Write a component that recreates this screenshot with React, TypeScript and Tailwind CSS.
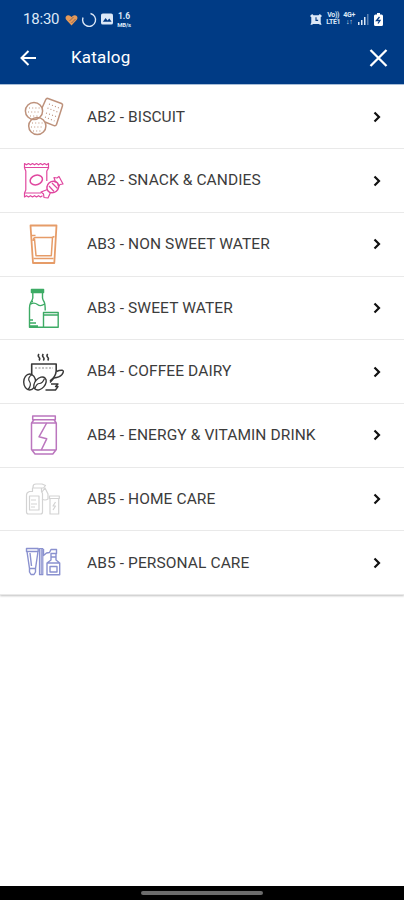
import type { ReactNode } from "react";

type Category = {
  name: string;
  color: string;
  icon: ReactNode;
};

const CATEGORIES: Category[] = [
  {
    name: "AB2 - BISCUIT",
    color: "text-[#bd917b]",
    icon: (
      <>
        <path d="M26 3.5 39.5 8.5Q41 9.2 40.5 10.8L34.5 29.5Q33.8 31.2 32 30.6L23 27M20 13 23.8 4.5Q24.5 3 26 3.5" strokeWidth="1.5" />
        <circle cx="12" cy="16" r="8.6" strokeWidth="1.5" />
        <circle cx="15.3" cy="31" r="8.6" strokeWidth="1.5" />
        <path d="M27 9 37 13M25.5 13 35.5 17M24 18 34 21.5M23 22 32.5 26" strokeDasharray="1 2.2" />
        <path d="M7 13h11M6 17h12M8 21h9M10 28h11M9 32h12M11 36h9" strokeDasharray="1 2.2" />
      </>
    ),
  },
  {
    name: "AB2 - SNACK & CANDIES",
    color: "text-[#e0479f]",
    icon: (
      <>
        <path d="M2.5 9V4.5l2 1.3 2-1.3 2 1.3 2-1.3 2 1.3 2-1.3 2 1.3 2-1.3 2 1.3 2-1.3 2 1.3 2-1.3V9l-1.7 3v10M2.5 9l1.3 3v19l-1.3 3v4l2-1.3 2 1.3 2-1.3 2 1.3 2-1.3 2 1.3 2-1.3 2 1.3 2-1.3" />
        <path d="M3 8.5h23M3 34h16" />
        <ellipse cx="14.3" cy="21" rx="6.3" ry="4.7" transform="rotate(-18 14.3 21)" strokeWidth="1.5" />
        <ellipse cx="30.8" cy="28" rx="6.2" ry="5.5" transform="rotate(-40 30.8 28)" strokeWidth="1.5" />
        <path d="m25.5 30.5-6.5 2.5 2.5 2 .5 3.5 4 .5 2.5-5.5M33.5 23.5 32 18.5l3 .5 2-1.5 4 7.500-3 .5-1 1.500-1.500-1.500M27 27l5 5.500M30 24l5.500 5.500" />
      </>
    ),
  },
  {
    name: "AB3 - NON SWEET WATER",
    color: "text-[#e69c68]",
    icon: (
      <>
        <path d="M8.5 3.5h26L32.3 41H11z" strokeWidth="1.8" />
        <path d="M9.5 13.5h4M30 15.5l2.5-1M11 19q0-3.5 3-3.5h16.5L29.3 33.8H14L12.5 17M11.5 36.5h20" strokeWidth="1.5" />
      </>
    ),
  },
  {
    name: "AB3 - SWEET WATER",
    color: "text-[#3dab65]",
    icon: (
      <>
        <path d="M9.5 3.5h12v3h-12zM9.8 5h11.5" strokeWidth="1.5" />
        <path d="M10.8 7v5Q10.5 14 8.5 17q-1 2-1 5v19.2h14M20.5 7v5q.3 2 1.7 4 1 2 1 8.5M10 15.5h1M8.5 18q4-2 7 .5t7-.5M8 34h3M8 37h6M8 40h8" strokeWidth="1.4" />
        <path d="M21.5 26.5h14.7v14.7H21.5zM22 29h14" strokeWidth="1.4" />
      </>
    ),
  },
  {
    name: "AB4 - COFFEE DAIRY",
    color: "text-[#383838]",
    icon: (
      <>
        <path d="M17 4q-1.5 1.7 0 3.3t0 3.2M21.3 4q-1.5 1.7 0 3.3t0 3.2M25.7 4q-1.5 1.7 0 3.3t0 3.2" strokeWidth="1.5" />
        <path d="M9.7 24V14h24.5v7q-.5 6-6.2 10" strokeWidth="1.6" />
        <path d="M13 18h18" strokeDasharray="2 1.5" opacity=".6" />
        <path d="M34.5 21.5q3-1.5 6-1.2 2 .7-.5 4.2-2.5 3-8 3.5l-4 4.5M29 34h7l-2.500 2.500h2.500l-2.500 3.500H23.500" strokeWidth="1.4" />
        <ellipse cx="7.7" cy="32" rx="6" ry="8" strokeWidth="1.4" />
        <path d="M10 24.5q-5 3.5-2.5 7t-1.5 8" />
        <ellipse cx="18" cy="33.5" rx="5" ry="7.5" transform="rotate(42 18 33.5)" fill="#fff" strokeWidth="1.4" />
        <path d="M22.5 28.5q-2 5-5 5T13 38.5" />
      </>
    ),
  },
  {
    name: "AB4 - ENERGY & VITAMIN DRINK",
    color: "text-[#bb76be]",
    icon: (
      <>
        <path d="M10.7 3h22.6v3.7H10.7zM12 6.7 9.5 10M32 6.7l2.3 3.3M9.5 10h24.8v26.5l-3.5 4.500H13l-3.500-4.500zM9.500 37h24.800" strokeWidth="1.5" />
        <path d="M24.7 10 17 23.8l7.7 2L19.3 37" strokeWidth="1.5" />
      </>
    ),
  },
  {
    name: "AB5 - HOME CARE",
    color: "text-[#d3d3d3]",
    icon: (
      <>
        <path d="M11 10q0-3 3-3h6l3.5 1.5-2 2.5H11zM10.5 11h9v3.5l1 2V35q0 2-2 2h-12q-2 0-2-2V18q0-2.500 3-3.500h3z" />
        <path d="M7.5 19h9.5v14H7.5zM9 23h5M9 27h6M9 30h4M20 15l3-4 3 6v5q-3 2-6 0" />
        <path d="M27.5 19h9.8v2.5h-9.8zM28 21.5V37h8.7V21.5M33.5 25l-2.5 4h2.5l-2.5 4" />
      </>
    ),
  },
  {
    name: "AB5 - PERSONAL CARE",
    color: "text-[#8a91cf]",
    icon: (
      <>
        <path d="M4.5 7.5h11.7v3H4.5zM5 10.5l2.5 17h6l2.5-17M7.5 27.5v3.5l1.5 2.5h3l1.5-2.5v-3.5M8 12l1.5 13" strokeWidth="1.4" />
        <path d="M17.5 7.5h3.3v26.2h-3.3zM19.2 8v25" />
        <path d="M21.5 8v6.5l3-2.5 3-.5 1.5-3h5.5v4h-5.5V16M34 12v4h-5.5M29 16v3l-4 3v11.7h12.7V22L34 19v-3M25 22h12.7M28 25.5h7v5.5h-7z" strokeWidth="1.4" />
      </>
    ),
  },
];

function StatusBar() {
  return (
    <div className="flex h-[38px] items-center pl-[23px] pr-[21px] text-[#dce8f7]">
      <span className="w-[42px] text-[15px] leading-none tracking-[-0.2px]">18:30</span>
      <svg width="13" height="12" viewBox="0 0 13 12" className="mt-px">
        <path d="M6.5 11.5 1 5.5Q-.3 3 2 1.5 4.5.5 6.5 3 8.5.5 11 1.5 13.3 3 12 5.5z" fill="#e59a59" />
        <path d="m4.5 7 4-4M6.5 9l4-4" stroke="#7a5a55" strokeWidth=".8" />
      </svg>
      <svg width="16" height="16" viewBox="0 0 16 16" fill="none" stroke="currentColor" strokeWidth="1.4" className="ml-[3px] mt-px">
        <path d="M9.5 1.5a6.5 6.5 0 1 1-7.5 4" />
      </svg>
      <svg width="12" height="12" viewBox="0 0 13 12" className="ml-1">
        <rect width="13" height="12" rx="2" fill="currentColor" />
        <path d="m2 9 3-4 2 2.5L9 5.5 11.5 9z" fill="#053b84" />
      </svg>
      <div className="ml-1 flex w-[14px] flex-col items-center font-bold">
        <span className="text-[8.5px] leading-[10px]">1.6</span>
        <span className="text-[6px] leading-[7px] tracking-[-0.2px]">MB/s</span>
      </div>
      <svg width="12" height="13" viewBox="0 0 14 14" className="ml-auto">
        <path d="m0 3 2.5-2.5L4 2h6l1.5-1.5L14 3l-1.500 1.500v6L13.500 13h-2l-1-.7h-7l-1 .7h-2l1-2.500v-6z" fill="currentColor" />
        <path d="M7 4.5V8h2.5" fill="none" stroke="#053b84" strokeWidth="1.3" />
      </svg>
      <div className="ml-[4px] flex flex-col items-center text-[7px] font-bold leading-[7px] tracking-[-0.3px]">
        <span>Vo))</span>
        <span>LTE1</span>
      </div>
      <div className="ml-[3px] flex flex-col items-center text-[7px] font-bold leading-[7px] tracking-[-0.3px]">
        <span>4G+</span>
        <span>↓↑</span>
      </div>
      <svg width="11" height="12" viewBox="0 0 11 12" fill="currentColor" className="ml-[3px]">
        <path d="M0 9h1.5v3H0zM3 7h1.5v5H3zM6 4h1.5v8H6z" />
        <path d="M9 1h1.5v11H9z" opacity=".4" />
      </svg>
      <svg width="9" height="13" viewBox="0 0 9 13" className="ml-[5px]">
        <path d="M3 0h3v1.5h1.5Q9 1.5 9 3v8.5Q9 13 7.5 13h-6Q0 13 0 11.5V3q0-1.500 1.500-1.500H3z" fill="#fff" />
        <path d="M5.5 4 2.5 7.5h3.5L4 10.5" fill="none" stroke="#053b84" strokeWidth="1.3" />
      </svg>
    </div>
  );
}

function CategoryRow({ category }: { category: Category }) {
  return (
    <li className="flex h-[63.7px] items-center border-b border-[#e9e9e9] pl-[22px] pr-[23px]">
      <svg
        width="44"
        height="44"
        viewBox="0 0 44 44"
        fill="none"
        stroke="currentColor"
        strokeWidth="1.2"
        strokeLinejoin="round"
        className={category.color}
      >
        {category.icon}
      </svg>
      <span className="ml-[21px] whitespace-nowrap pt-px text-[15.5px] tracking-[0.1px] text-[#3c3c3c]">{category.name}</span>
      <svg width="8" height="12" viewBox="0 0 8 12" fill="none" stroke="#111" strokeWidth="2.2" className="ml-auto">
        <path d="m1.5 1.5 4.5 4.5-4.5 4.5" />
      </svg>
    </li>
  );
}

export default function App() {
  return (
    <div className="flex h-[900px] w-[404px] flex-col overflow-hidden bg-white font-[Roboto,sans-serif]">
      <header className="h-[85px] shrink-0 border-b border-[#aac0db] bg-[#003b85] text-white">
        <StatusBar />
        <div className="flex h-10 items-center pl-5 pr-4">
          <svg width="17" height="16" viewBox="0 0 17 16" fill="none" stroke="currentColor" strokeWidth="2">
            <path d="M16 8H2M8.5 1 1.5 8l7 7" />
          </svg>
          <h1 className="ml-[34px] text-[17px] tracking-[0.2px]">Katalog</h1>
          <svg width="19" height="18" viewBox="0 0 19 18" fill="none" stroke="currentColor" strokeWidth="2.3" className="ml-auto">
            <path d="m1.5 1 16 16M17.5 1l-16 16" />
          </svg>
        </div>
      </header>
      <main className="flex-1">
        <ul className="pt-[0.5px] shadow-[0_1px_2px_rgba(0,0,0,0.25)]">
          {CATEGORIES.map((category) => (
            <CategoryRow key={category.name} category={category} />
          ))}
        </ul>
      </main>
      <footer className="flex h-[14px] shrink-0 justify-center bg-black pt-[5px]">
        <div className="h-1 w-[122px] rounded-full bg-[#6b6b6b]" />
      </footer>
    </div>
  );
}
